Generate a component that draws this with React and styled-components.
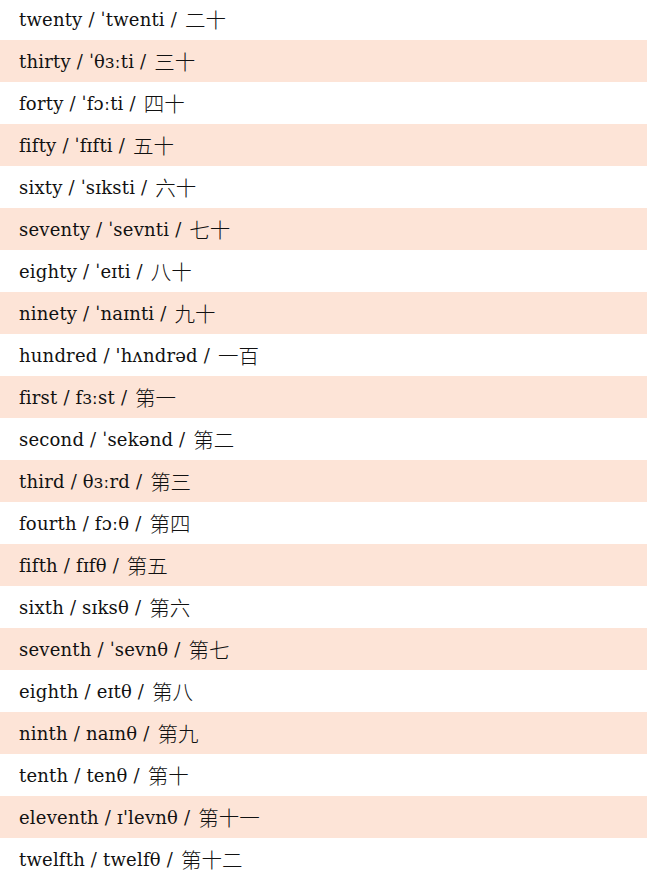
import React from 'react'
import styled, { createGlobalStyle } from 'styled-components'

const Global = createGlobalStyle`
  body {
    margin: 0;
    background: #ffffff;
    font-family: "DejaVu Serif", "Noto Sans CJK SC", serif;
  }
`

const List = styled.ul`
  list-style: none;
  margin: -2px 0 0;
  padding: 0;
`

const Row = styled.li`
  height: 42px;
  display: flex;
  align-items: center;
  white-space: pre;
  padding-left: 19px;
  font-size: 18px;
  letter-spacing: 0.2px;
  color: #111;
  background: ${(p) => (p.$shaded ? '#fde4d7' : '#ffffff')};
`

const Han = styled.span`
  font-family: "Noto Sans CJK SC", sans-serif;
  font-size: 20.5px;
  font-weight: 300;
  letter-spacing: 0;
  margin-left: 2px;
  color: #111;
`

const words = [
  ['twenty', 'ˈtwenti', '二十'],
  ['thirty', 'ˈθɜːti', '三十'],
  ['forty', 'ˈfɔːti', '四十'],
  ['fifty', 'ˈfɪfti', '五十'],
  ['sixty', 'ˈsɪksti', '六十'],
  ['seventy', 'ˈsevnti', '七十'],
  ['eighty', 'ˈeɪti', '八十'],
  ['ninety', 'ˈnaɪnti', '九十'],
  ['hundred', "'hʌndrəd", '一百'],
  ['first', 'fɜːst', '第一'],
  ['second', 'ˈsekənd', '第二'],
  ['third', 'θɜːrd', '第三'],
  ['fourth', 'fɔːθ', '第四'],
  ['fifth', 'fɪfθ', '第五'],
  ['sixth', 'sɪksθ', '第六'],
  ['seventh', 'ˈsevnθ', '第七'],
  ['eighth', 'eɪtθ', '第八'],
  ['ninth', 'naɪnθ', '第九'],
  ['tenth', 'tenθ', '第十'],
  ['eleventh', "ɪ'levnθ", '第十一'],
  ['twelfth', 'twelfθ', '第十二'],
]

const App = () => (
  <>
    <Global />
    <List>
      {words.map(([en, ipa, zh], i) => (
        <Row key={en} $shaded={i % 2 === 1}>
          {`${en} / ${ipa} / `}
          <Han>{zh}</Han>
        </Row>
      ))}
    </List>
  </>
)

export default App
